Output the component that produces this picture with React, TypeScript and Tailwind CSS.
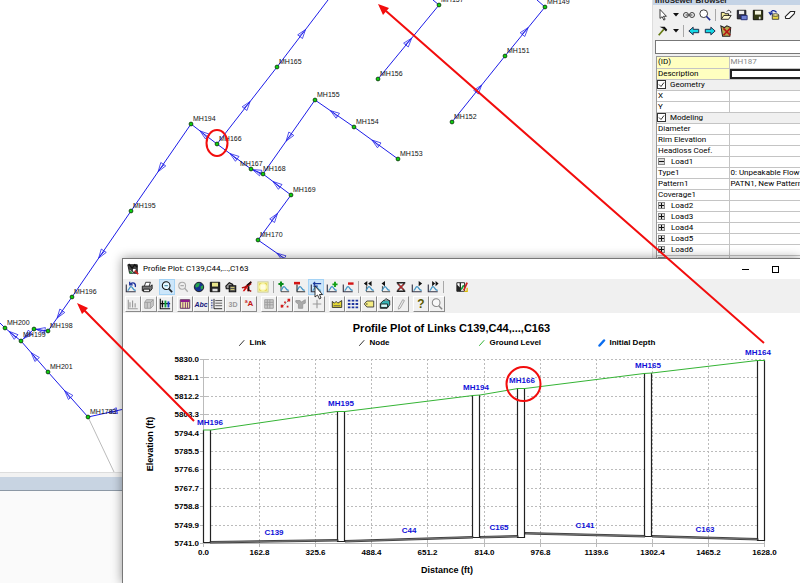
import React from "react";

type Point = [number, number];

const peak = (
  <path d="M3 11C5 11 5 6.500 7 6.500S9 11 12.500 11" fill="none" stroke="#3f93c4" strokeWidth="1.400" />
);
const axes = <path d="M1.500 4V12.500H12.500" fill="none" stroke="#334" strokeWidth="1.300" />;
const bars = "M3.500 11V5M6.500 11V3M9.500 11V6";

const icons: Record<string, React.ReactNode> = {
  undoPlot: (<>{axes}{peak}<path d="M12 7C13 2 9 1 6.500 3.500M5.500 1V4.500H9" fill="none" stroke="#1a2f9c" strokeWidth="1.500" /></>),
  print: (<><path d="M4 6L5.500 1.500H11L9.500 6" fill="#fff" stroke="#222" /><path d="M1.500 6H11L13 4.500V9L11 11.500H1.500Z" fill="#777" stroke="#111" /><path d="M3 9.500H10V12.500H3Z" fill="#eee" stroke="#111" /></>),
  zoomIn: (<><circle cx="6" cy="5.500" r="4.500" fill="#e6f6ff" stroke="#111" strokeWidth="1.200" /><path d="M4 5.500H8" stroke="#168" /><path d="M9 9L13 13" stroke="#222" strokeWidth="2" /></>),
  zoomOut: (<><circle cx="6" cy="5.500" r="4" fill="#eee" stroke="#aaa" strokeWidth="1.200" /><path d="M4 5.500H8M9 8.500L12.500 12.500" stroke="#aaa" strokeWidth="1.500" /></>),
  globe: (<><circle cx="7" cy="7" r="5.500" fill="#14328f" stroke="#111" /><path d="M4 3L8 2L7 6L4 8L2.500 6ZM9 6L12 5L11.500 9L9 10Z" fill="#27a34a" /></>),
  save: (<><path d="M1.500 1.500H12.500V12.500H1.500Z" fill="#222" stroke="#000" /><path d="M3.500 2H10.500V6.500H3.500Z" fill="#e8e48a" /><path d="M4 9H10V12H4Z" fill="#ddd" /></>),
  copy: (<><path d="M1 6L5 2L9 4V9H1.500Z" fill="#999" stroke="#111" strokeWidth="1.300" /><path d="M5 5.500H12.500V12.500H5Z" fill="#555" stroke="#111" strokeWidth="1.300" /><path d="M6.500 7.500H11M6.500 10H11" stroke="#e8df75" /></>),
  brush: (<><path d="M2 12L6 5L8 7L4 12Z" fill="#d11" /><path d="M1 8L5 7L12 1M7 7L12 3M8 8V12M8 10L12 12" fill="none" stroke="#a11" strokeWidth="1.600" /><path d="M7 5L12 1M9 6V12" stroke="#111" strokeWidth="1.600" /></>),
  fit: (<><rect x="1" y="1" width="12" height="12" fill="#f8f6a0" stroke="#c9c9a0" /><path d="M4 4H10V10H4Z" fill="#fffde0" /><path d="M3 5V3H5M9 3H11V5M11 9V11H9M5 11H3V9" fill="none" stroke="#e2ce57" /></>),
  addNode: (<><path d="M3.500 6V12.500H13" fill="none" stroke="#333" />{peak}<path d="M3.500 .500V6.500M.5 3.500H6.500" stroke="#088a18" strokeWidth="2.400" /></>),
  delNode: (<>{peak}<path d="M3.500 4V12.500H13" fill="none" stroke="#333" strokeWidth="1.300" /><path d="M0 2.500H7" stroke="#d41414" strokeWidth="3" /></>),
  swapPlot: (<>{axes}{peak}<path d="M4 3H13M6 1L4 3L6 5M4 6H9" fill="none" stroke="#1c3c9c" strokeWidth="1.300" /></>),
  addEnd: (<>{axes}{peak}<path d="M10.500 1V7M7.500 4H13.500" stroke="#12a012" strokeWidth="2.200" /></>),
  delEnd: (<>{axes}{peak}<path d="M7 3H13.500" stroke="#d41414" strokeWidth="2.800" /></>),
  first: (<><path d="M4 6V12.500H13" fill="none" stroke="#333" />{peak}<path d="M5 0V6L1 3ZM10 0V6L6 3Z" fill="#111" /></>),
  prev: (<><path d="M4 6V12.500H13" fill="none" stroke="#333" />{peak}<path d="M7 0V6L3 3Z" fill="#111" /></>),
  stop: (<><path d="M2 2H12M2 12H12M3 3L11 11M11 3L3 11" stroke="#222" strokeWidth="1.600" /><path d="M4 4L10 10M10 4L4 10" stroke="#c22a2a" strokeWidth="1.200" /></>),
  next: (<>{axes}{peak}<path d="M9 0V6L13 3Z" fill="#111" /></>),
  last: (<>{axes}{peak}<path d="M6 0V6L9.500 3ZM10 0V6L13.500 3Z" fill="#111" /></>),
  report: (<><path d="M1 2H5V12H1ZM5 2H10V12H5Z" fill="#fff" stroke="#111" /><path d="M1 4L5 8V12H1Z" fill="#222" /><path d="M6 10L9 5" stroke="#1a9b35" strokeWidth="2" /><path d="M9 11L13 2" stroke="#c22" strokeWidth="2" /><path d="M10 12H13V8" stroke="#db0" fill="none" strokeWidth="1.500" /></>),
  barsGray: (<path d={`M1.500 2V12.500H12.500${bars}`} fill="none" stroke="#9a9a9a" strokeWidth="1.300" />),
  cubes: (<><path d="M4 2H12V9L9 12H2V5Z" fill="#ccc" stroke="#999" /><path d="M2 5H9V12M9 5L12 2M5 5V12" fill="none" stroke="#999" /></>),
  barsColor: (<><path d="M1.500 1V12.500H13M1 6.500H13" fill="none" stroke="#111" strokeWidth="1.300" /><path d="M4 3V11" stroke="#111" strokeWidth="1.600" /><path d="M7.500 3V11" stroke="#10a040" strokeWidth="2.200" /><path d="M11 4V11" stroke="#1540c8" strokeWidth="2.200" /></>),
  tableColor: (<><path d="M1.500 2H12.500V12H1.500Z" fill="#efe9a0" stroke="#4b1550" /><path d="M2 3.500H12" stroke="#8c1c8c" strokeWidth="2.500" /><path d="M4.500 5V12M7.500 5V12M10 5V12" stroke="#742474" /></>),
  gridLines: (<><path d="M3.500 1V12.500H13" fill="none" stroke="#111" /><path d="M5 3H13M5 6H13M5 9H13" stroke="#444" /><path d="M1 2V12" stroke="#23348f" strokeWidth="1.500" strokeDasharray="1.500 1.500" /></>),
  gridGray: (<path d="M2 2H12V12H2ZM2 5H12M2 8H12M5 2V12M8 2V12" fill="#ccc" stroke="#999" />),
  scatter: (<><path d="M3 11L11 3" stroke="#777" strokeDasharray="2 1" /><path d="M2 8H5V11H2ZM6 4H8V6H6ZM10 1H13V4H10ZM9 9H11V11H9Z" fill="#d31b1b" /></>),
  mergeGray: (<path d="M1 3H6L7 5L12 2V6L9 7V12H4V7L1 5Z" fill="#aaa" stroke="#999" />),
  cross: (<path d="M7 2V12M2 7H12" stroke="#999" strokeWidth="1.300" />),
  crown: (<><path d="M1.500 4L4 6L6 4L8 6L12.500 3V11H1.500Z" fill="#e7da32" stroke="#222" /><path d="M3 9H11" stroke="#555" /></>),
  nodes: (<path d="M1 3H13M1 7H13M1 11H13" stroke="#2035a0" strokeWidth="2.200" strokeDasharray="3 1.500" />),
  tag: (<><path d="M1.500 7L4.500 3.500H12.500V10.500H4.500Z" fill="#f5ed83" stroke="#333" /><circle cx="4.500" cy="7" r=".8" fill="#333" /></>),
  box3d: (<><path d="M1.500 6.500L5 3H12.500V8L9.500 12H1.500Z" fill="#38b6b6" stroke="#111" /><path d="M2 7H10V11H2ZM6 3L8 .800L12 3" fill="#d5ffff" stroke="#111" /></>),
  pen: (<path d="M4 11L9 2L11 3L6 12L4 13Z" fill="#eee" stroke="#999" />),
  lens: (<><circle cx="6" cy="5.500" r="4.500" fill="#f8f8f8" stroke="#888" strokeWidth="1.200" /><path d="M9 9L13 13" stroke="#888" strokeWidth="1.700" /></>),
  pointer: (<path d="M3.500 .5V11L6 9L8 13L9.500 12L7.500 8.500H11Z" fill="#fff" stroke="#222" />),
  link: (<><circle cx="3.500" cy="7" r="2.900" fill="none" stroke="#222" /><circle cx="10.500" cy="7" r="2.900" fill="none" stroke="#222" /><path d="M3 7H6M8 7H11" stroke="#222" /></>),
  search: (<><circle cx="5.500" cy="5.500" r="4.500" fill="#fff" stroke="#333" strokeWidth="1.100" /><path d="M8.500 8.500L13 13" stroke="#1f2d8f" strokeWidth="1.900" /></>),
  open: (<><path d="M1.500 12V4H5L6 5.500H10V8" fill="#f5ee9b" stroke="#111" /><path d="M1.500 12L4.500 7.500H13L10 12Z" fill="#fffbd0" stroke="#111" /><path d="M8 3C9 1 11 1 12.500 3V4.500" fill="none" stroke="#111" /></>),
  saveAs: (<><path d="M1.500 1.500H11.500V11.500H1.500Z" fill="#334" stroke="#111" /><path d="M3.500 2H9.500V6H3.500Z" fill="#eee" /><path d="M6 7.500H13V12.500H6Z" fill="#6f80d4" stroke="#1b2471" /></>),
  saveDark: (<><path d="M1.500 1.500H12.500V12.500H1.500Z" fill="#353b16" stroke="#000" /><path d="M3.500 2H10.500V6.500H3.500Z" fill="#f4f4e0" /><path d="M8 9H10V12H8Z" fill="#ddd" /></>),
  dbUndo: (<><path d="M5 7H12.500V12H5Z" fill="#ecd944" stroke="#333" /><ellipse cx="8.700" cy="7" rx="3.800" ry="1.500" fill="#fff19a" stroke="#333" /><path d="M3 6C3 2 7 0 10 4M1 3.500L3 6.500L5.500 4.500" fill="none" stroke="#172d9b" strokeWidth="1.500" /></>),
  eraser: (<path d="M1.500 9L7.500 3H12.500L12 5.500L6.500 11H2Z" fill="#fff" stroke="#222" strokeWidth="1.200" />),
  hammer: (<><path d="M2 12L8 5" stroke="#667a12" strokeWidth="2" /><path d="M3 2H9L12 5.500L10.500 7.500L7.500 4.500Z" fill="#111" /></>),
  arrowLeft: (<path d="M1 7L6 2.500V5H12.500V9H6V11.500Z" fill="#15d7e4" stroke="#113" />),
  arrowRight: (<path d="M13 7L8 2.500V5H1.500V9H8V11.500Z" fill="#15d7e4" stroke="#113" />),
  clear: (<><path d="M1 1L5 3L8 1L12.500 3L11.500 13H3Z" fill="#b9a84c" stroke="#222" strokeWidth="1.200" /><path d="M4 4L12 12M12 4L4 12" stroke="#b51515" strokeWidth="1.900" /></>),
  app: (<><path d="M1 2H12V12H3Z" fill="#444" stroke="#111" /><path d="M2 1L6 6L9 2L12 5" stroke="#111" fill="none" strokeWidth="1.500" /><path d="M7 7H10V10H7Z" fill="#fff" /><path d="M9 9L13 13" stroke="#c22" strokeWidth="2" /><path d="M3 8L7 12" stroke="#eee" /><path d="M3 11H6" stroke="#29a943" strokeWidth="2" /></>),
};

const Icon = ({ name }: { name: string }) => (
  <svg viewBox="0 0 14 14" className="size-3 shrink-0" aria-hidden="true">{icons[name]}</svg>
);

const glyphs: Record<string, React.ReactNode> = {
  abc: <span className="text-[7px] font-bold italic text-[#17177c]">Abc</span>,
  d3: <span className="text-[7px] font-bold text-[#999]">3D</span>,
  fonts: <span className="text-[8px] font-bold text-[#c41616]">ªA</span>,
  help: <span className="text-[12px] font-bold text-[#5d5a00]">?</span>,
};

function FlatTool({ name, active }: { name: string; active?: boolean }) {
  return (
    <button aria-label={name} className={active ? "grid h-4 w-4 place-items-center border border-[#a5d3f5] bg-[#cce6fa]" : "grid h-4 w-4 place-items-center"}>
      <Icon name={name} />
    </button>
  );
}

function RaisedTool({ name }: { name: string }) {
  return (
    <button aria-label={name} className="grid h-4 w-4 place-items-center overflow-hidden border border-t-white border-l-white border-r-[#8a8a8a] border-b-[#8a8a8a] bg-[#f0f0f0] leading-none">
      {glyphs[name] ?? <Icon name={name} />}
    </button>
  );
}

const Separator = () => <div className="mx-0.5 h-3 w-px bg-[#a8a8a8]" />;

const Caret = () => (
  <button aria-label="More" className="grid h-4 w-2.5 place-items-center">
    <svg viewBox="0 0 6 4" className="h-1 w-1.5"><path d="M0 0H6L3 3.500Z" fill="#111" /></svg>
  </button>
);

/* Sewer network map */

const manholes: { at: Point; name?: string; label?: Point }[] = [
  { at: [191, 124], name: "MH194" }, { at: [217, 144], name: "MH166" },
  { at: [251, 169], name: "MH167", label: [240, 166] }, { at: [263, 174], name: "MH168", label: [263, 171] },
  { at: [291, 195], name: "MH169" }, { at: [258, 240], name: "MH170" },
  { at: [315, 100], name: "MH155" }, { at: [354, 127], name: "MH154" },
  { at: [398, 159], name: "MH153" }, { at: [277, 67], name: "MH165" },
  { at: [378, 79], name: "MH156" }, { at: [439, 5], name: "MH157", label: [441, 2] },
  { at: [505, 56], name: "MH151" }, { at: [452, 122], name: "MH152" },
  { at: [545, 7], name: "MH149", label: [547, 4] }, { at: [131, 211], name: "MH195" },
  { at: [72, 297], name: "MH196" }, { at: [48, 331], name: "MH198" },
  { at: [34, 329] }, { at: [21, 341], name: "MH199", label: [23, 337] },
  { at: [5, 328], name: "MH200" }, { at: [48, 372], name: "MH201" },
  { at: [88, 417], name: "MH1783" },
];

const pipes: [Point, Point][] = [
  [[277, 67], [328, 0]], [[217, 144], [277, 67]], [[217, 144], [191, 124]],
  [[191, 124], [131, 211]], [[131, 211], [72, 297]], [[72, 297], [48, 331]],
  [[48, 331], [34, 329]], [[34, 329], [21, 341]], [[21, 341], [5, 328]],
  [[48, 372], [21, 341]], [[88, 417], [48, 372]], [[138, 406], [88, 417]],
  [[251, 169], [217, 144]], [[263, 174], [251, 169]], [[291, 195], [263, 174]],
  [[258, 240], [291, 195]], [[304, 272], [258, 240]], [[315, 100], [263, 174]],
  [[354, 127], [315, 100]], [[398, 159], [354, 127]], [[378, 79], [439, 5]],
  [[452, 122], [505, 56]], [[505, 56], [545, 7]],
];

function NetworkMap() {
  return (
    <svg className="block h-full w-full" fontFamily="'Liberation Sans', Arial, sans-serif">
      <g stroke="#1c1ce8" fill="none">
        <path d="M0 323L5 328M433 0L439 5M537 0L545 7" />
        {pipes.map(([a, b], i) => {
          const angle = (Math.atan2(b[1] - a[1], b[0] - a[0]) * 180) / Math.PI;
          return (
            <g key={i}>
              <path d={`M${a[0]} ${a[1]}L${b[0]} ${b[1]}`} />
              <path d="M5 0L-4 -3V3ZM-4 -1L2 0" strokeWidth=".7" transform={`translate(${(a[0] + b[0]) / 2} ${(a[1] + b[1]) / 2}) rotate(${angle})`} />
            </g>
          );
        })}
      </g>
      <path d="M88 417L114 472" stroke="#bbb" />
      {manholes.map(({ at, name, label }, i) => (
        <g key={i}>
          <circle cx={at[0]} cy={at[1]} r="1.900" fill="#0bd20b" stroke="#123d12" strokeWidth=".9" />
          {name && <text x={label ? label[0] : at[0] + 2} y={label ? label[1] : at[1] - 3} fontSize="7" fill="#111">{name}</text>}
        </g>
      ))}
    </svg>
  );
}

/* Attribute browser */

type Row = { label: string; value?: string; kind?: "key" | "edit" | "group" | "open" | "closed" };

const rows: Row[] = [
  { label: "(ID)", value: "MH187", kind: "key" },
  { label: "Description", kind: "edit" },
  { label: "Geometry", kind: "group" },
  { label: "X" },
  { label: "Y" },
  { label: "Modeling", kind: "group" },
  { label: "Diameter" },
  { label: "Rim Elevation" },
  { label: "Headloss Coef." },
  { label: "Load1", kind: "open" },
  { label: "Type1", value: "0: Unpeakable Flow" },
  { label: "Pattern1", value: "PATN1, New Pattern" },
  { label: "Coverage1" },
  { label: "Load2", kind: "closed" },
  { label: "Load3", kind: "closed" },
  { label: "Load4", kind: "closed" },
  { label: "Load5", kind: "closed" },
  { label: "Load6", kind: "closed" },
  { label: "Load7", kind: "closed" },
];

function AttributeRow({ label, value, kind }: Row) {
  if (kind === "group") {
    return (
      <tr className="h-[11px] border-b border-[#c4c4c4] bg-[#f0f0f0]">
        <th colSpan={2} className="p-0 text-left font-normal">
          <label className="flex h-2.5 items-center gap-1">
            <span className="grid">
              <input type="checkbox" defaultChecked className="col-start-1 row-start-1 size-[9px] appearance-none border border-[#333] bg-white" />
              <svg viewBox="0 0 9 9" className="pointer-events-none col-start-1 row-start-1 size-[9px]"><path d="M2 4.500L4 6.500L7 2.500" fill="none" stroke="#333" /></svg>
            </span>
            {label}
          </label>
        </th>
      </tr>
    );
  }
  const yellow = kind === "key" || kind === "edit";
  return (
    <tr className="h-[11px] border-b border-[#c4c4c4]">
      <th className={yellow ? "border-r border-[#c4c4c4] bg-[#ffffc0] p-0 text-left font-normal" : "border-r border-[#c4c4c4] p-0 text-left font-normal"}>
        <div className="flex h-2.5 items-center gap-1.5 pl-px whitespace-nowrap">
          {(kind === "open" || kind === "closed") && (
            <button aria-label={`Toggle ${label}`} className="grid size-[7px] place-items-center border border-[#888] bg-[#ddd]">
              <svg viewBox="0 0 5 5" className="size-[5px]"><path d={kind === "open" ? "M0 2.500H5" : "M0 2.500H5M2.500 0V5"} stroke="#111" /></svg>
            </button>
          )}
          {label}
        </div>
      </th>
      <td className="overflow-hidden p-0 whitespace-nowrap">
        {kind === "edit" ? (
          <input aria-label={label} className="block h-2.5 w-full border-2 border-r-0 border-[#222] bg-white p-0 leading-none" />
        ) : (
          <div className={kind === "key" ? "h-2.5 pl-px text-[#888]" : "h-2.5 pl-px"}>{value}</div>
        )}
      </td>
    </tr>
  );
}

function AttributeBrowser() {
  return (
    <aside className="flex w-[148px] shrink-0 flex-col overflow-hidden border-l border-[#ddd] bg-[#f0f0f0]">
      <header className="flex h-[5px] shrink-0 items-end bg-[#c5d4e6] pl-0.5 text-[8px] leading-[9px] font-bold whitespace-nowrap text-[#222]">InfoSewer Browser</header>
      <div className="mt-0.5 flex h-4 shrink-0 items-center pl-0.5">
        <FlatTool name="pointer" /><Caret />
        <FlatTool name="link" /><FlatTool name="search" />
        <Separator />
        <FlatTool name="open" /><FlatTool name="saveAs" /><FlatTool name="saveDark" /><FlatTool name="dbUndo" /><FlatTool name="eraser" />
      </div>
      <div className="flex h-4 shrink-0 items-center pl-0.5">
        <FlatTool name="hammer" /><Caret />
        <Separator />
        <FlatTool name="arrowLeft" /><FlatTool name="arrowRight" /><FlatTool name="clear" />
      </div>
      <input aria-label="Selected element" className="mt-px ml-0.5 h-3.5 shrink-0 border border-r-0 border-[#777] bg-white" />
      <div className="mt-0.5 ml-[3px] flex-1 border-t border-l border-[#999] bg-white">
        <table className="w-full table-fixed border-collapse font-['Roboto',sans-serif] text-[8px] leading-[10px]">
          <colgroup><col className="w-[72px]" /><col /></colgroup>
          <tbody>{rows.map((r) => <AttributeRow key={r.label} {...r} />)}</tbody>
        </table>
      </div>
    </aside>
  );
}

/* Profile chart */

const xTicks = ["0.0", "162.8", "325.6", "488.4", "651.2", "814.0", "976.8", "1139.6", "1302.4", "1465.2", "1628.0"];
const yTicks = ["5830.0", "5821.1", "5812.2", "5803.3", "5794.4", "5785.5", "5776.6", "5767.7", "5758.8", "5749.9", "5741.0"];
const shafts: { x: number; top: number; bottom: number; name: string; cx: number }[] = [
  { x: 204, top: 430, bottom: 542, name: "MH196", cx: 210 },
  { x: 338, top: 411, bottom: 541, name: "MH195", cx: 341 },
  { x: 473, top: 395, bottom: 537, name: "MH194", cx: 476 },
  { x: 518, top: 388, bottom: 537, name: "MH166", cx: 522 },
  { x: 645, top: 373, bottom: 536, name: "MH165", cx: 648 },
  { x: 758, top: 360, bottom: 540, name: "MH164", cx: 758 },
];
const conduits: { name: string; from: Point; to: Point; label: Point }[] = [
  { name: "C139", from: [210, 542], to: [338, 540], label: [274, 535] },
  { name: "C44", from: [345, 541], to: [473, 537], label: [409, 533] },
  { name: "C165", from: [480, 537], to: [518, 536], label: [499, 530] },
  { name: "C141", from: [525, 533], to: [645, 536], label: [585, 528] },
  { name: "C163", from: [652, 536], to: [758, 539], label: [705, 532] },
];

function ProfileChart() {
  return (
    <svg viewBox="123 349 677 234" className="block w-full" fontFamily="'Liberation Sans', Arial, sans-serif" fontSize="8" fontWeight="bold">
      {yTicks.map((t, i) => {
        const y = Math.round(359 + i * 18.4) + 0.5;
        return (
          <g key={t}>
            <path d={`M203 ${y}H764`} stroke="#bbb" strokeDasharray={i === 10 ? undefined : "2 2"} />
            <path d={`M200 ${y}H208`} stroke="#bbb" />
            <text x="199" y={y + 2.5} textAnchor="end">{t}</text>
          </g>
        );
      })}
      {xTicks.map((t, i) => {
        const x = Math.round(203 + i * 56.1) + 0.5;
        return (
          <g key={t}>
            <path d={`M${x} 359V543`} stroke="#bbb" strokeDasharray={i === 0 ? undefined : "2 2"} />
            <path d={`M${x} 539V547`} stroke="#bbb" />
            <text x={x} y="555" textAnchor="middle">{t}</text>
          </g>
        );
      })}
      {shafts.map((s) => (
        <g key={s.name}>
          <path d={`M${s.x - 0.5} ${s.top}V${s.bottom}.5H${s.x + 6.5}V${s.top}`} fill="#fff" stroke="#222" strokeWidth="1.200" />
          <text x={s.cx} y={s.top - 5} textAnchor="middle" fill="#1010d8">{s.name}</text>
        </g>
      ))}
      {conduits.map(({ name, from, to, label }) => (
        <g key={name}>
          <path d={`M${from[0]} ${from[1] - 0.5}L${to[0]} ${to[1] - 0.5}V${to[1] + 1}L${from[0]} ${from[1] + 1}Z`} fill="#999" stroke="#222" strokeWidth=".8" />
          <text x={label[0]} y={label[1]} textAnchor="middle" fill="#1010d8">{name}</text>
        </g>
      ))}
      <path d="M203 430H211L337 411.500H345L473 395.500L480 395L518 388.500H525L644 373.500L652 373L757 360.500H765" fill="none" stroke="#35b435" />
      <text x="447" y="573" textAnchor="middle" fontSize="9">Distance (ft)</text>
      <text transform="translate(153 444) rotate(-90)" textAnchor="middle" fontSize="9">Elevation (ft)</text>
    </svg>
  );
}

const legend = [
  { name: "Link", color: "#333", width: 1 },
  { name: "Node", color: "#333", width: 1 },
  { name: "Ground Level", color: "#35b435", width: 1 },
  { name: "Initial Depth", color: "#0b6ef0", width: 2.5 },
];

function ProfileWindow() {
  return (
    <section className="absolute top-[258px] right-0 bottom-0 left-[122px] overflow-hidden border-t border-l border-[#777] bg-white shadow-[0_0_10px_rgba(0,0,0,0.4)]">
      <header className="flex h-5 items-center gap-1 pr-2.5 pl-1">
        <Icon name="app" />
        <h1 className="flex-1 font-['Roboto',sans-serif] text-[8px]">Profile Plot: C139,C44,...,C163</h1>
        <div className="flex">
          <button aria-label="Minimize" className="grid h-4 w-[30px] place-items-center"><span className="h-px w-[7px] bg-black" /></button>
          <button aria-label="Maximize" className="grid h-4 w-[30px] place-items-center"><span className="size-[7px] border border-black" /></button>
        </div>
      </header>
      <div className="flex flex-col gap-px bg-[#f0f0f0] pb-px">
        <div className="flex items-center">
          <FlatTool name="undoPlot" /><FlatTool name="print" />
          <div className="w-1" />
          <FlatTool name="zoomIn" active /><FlatTool name="zoomOut" /><FlatTool name="globe" /><FlatTool name="save" /><FlatTool name="copy" /><FlatTool name="brush" /><FlatTool name="fit" />
          <Separator />
          <FlatTool name="addNode" /><FlatTool name="delNode" /><FlatTool name="swapPlot" active /><FlatTool name="addEnd" /><FlatTool name="delEnd" />
          <Separator />
          <FlatTool name="first" /><FlatTool name="prev" /><FlatTool name="stop" /><FlatTool name="next" /><FlatTool name="last" />
          <Separator />
          <div className="w-2" />
          <FlatTool name="report" />
        </div>
        <div className="flex items-center gap-1 pl-0.5">
          <div className="flex"><RaisedTool name="barsGray" /><RaisedTool name="cubes" /><RaisedTool name="barsColor" /></div>
          <div className="flex"><RaisedTool name="tableColor" /><RaisedTool name="abc" /><RaisedTool name="gridLines" /><RaisedTool name="d3" /><RaisedTool name="fonts" /></div>
          <div className="flex"><RaisedTool name="gridGray" /><RaisedTool name="scatter" /><RaisedTool name="mergeGray" /><RaisedTool name="cross" /></div>
          <div className="flex"><RaisedTool name="crown" /><RaisedTool name="nodes" /><RaisedTool name="tag" /><RaisedTool name="box3d" /><RaisedTool name="pen" /></div>
          <div className="flex"><RaisedTool name="help" /><RaisedTool name="lens" /></div>
        </div>
      </div>
      <h2 className="mt-2 pr-5 text-center text-[11px] leading-[14px] font-bold">Profile Plot of Links C139,C44,...,C163</h2>
      <ul className="mx-auto grid w-[480px] grid-cols-4 pt-0.5 text-[8px] leading-3 font-bold">
        {legend.map((l) => (
          <li key={l.name} className="flex items-center gap-1 pl-4">
            <svg viewBox="0 0 8 8" className="size-2"><path d="M1.500 6.500L6 1.500" stroke={l.color} strokeWidth={l.width} strokeLinecap="round" /></svg>
            {l.name}
          </li>
        ))}
      </ul>
      <ProfileChart />
    </section>
  );
}

function Annotations() {
  return (
    <svg className="pointer-events-none absolute inset-0 h-full w-full" aria-hidden="true">
      <g fill="none" stroke="#f20d0d" strokeWidth="2">
        <ellipse cx="217" cy="143" rx="10.500" ry="13" />
        <circle cx="523.500" cy="384" r="17" />
        <path d="M194 421L83 309M764 343L386 11" />
      </g>
      <path d="M77 303L88 308L82 314ZM378 4L389 8L383 15Z" fill="#f20d0d" />
      <path d="M315 286V297L317.500 295L319.500 299L321 298L319.500 294.500H322.500Z" fill="#fff" stroke="#222" strokeWidth=".9" />
    </svg>
  );
}

export default function App() {
  return (
    <main className="relative flex h-screen min-h-[583px] overflow-hidden bg-white font-['Liberation_Sans',Arial,sans-serif] text-black">
      <div className="flex min-w-0 flex-1 flex-col">
        <div className="min-h-0 flex-1"><NetworkMap /></div>
        <div className="h-[5px] border-t border-[#ddd] bg-[#f2f2f2]" />
        <div className="h-3.5 border-b border-[#8c98a5] bg-[#c8d4e2]" />
        <div className="h-[92px] bg-[#fafafa]" />
      </div>
      <AttributeBrowser />
      <ProfileWindow />
      <Annotations />
    </main>
  );
}
